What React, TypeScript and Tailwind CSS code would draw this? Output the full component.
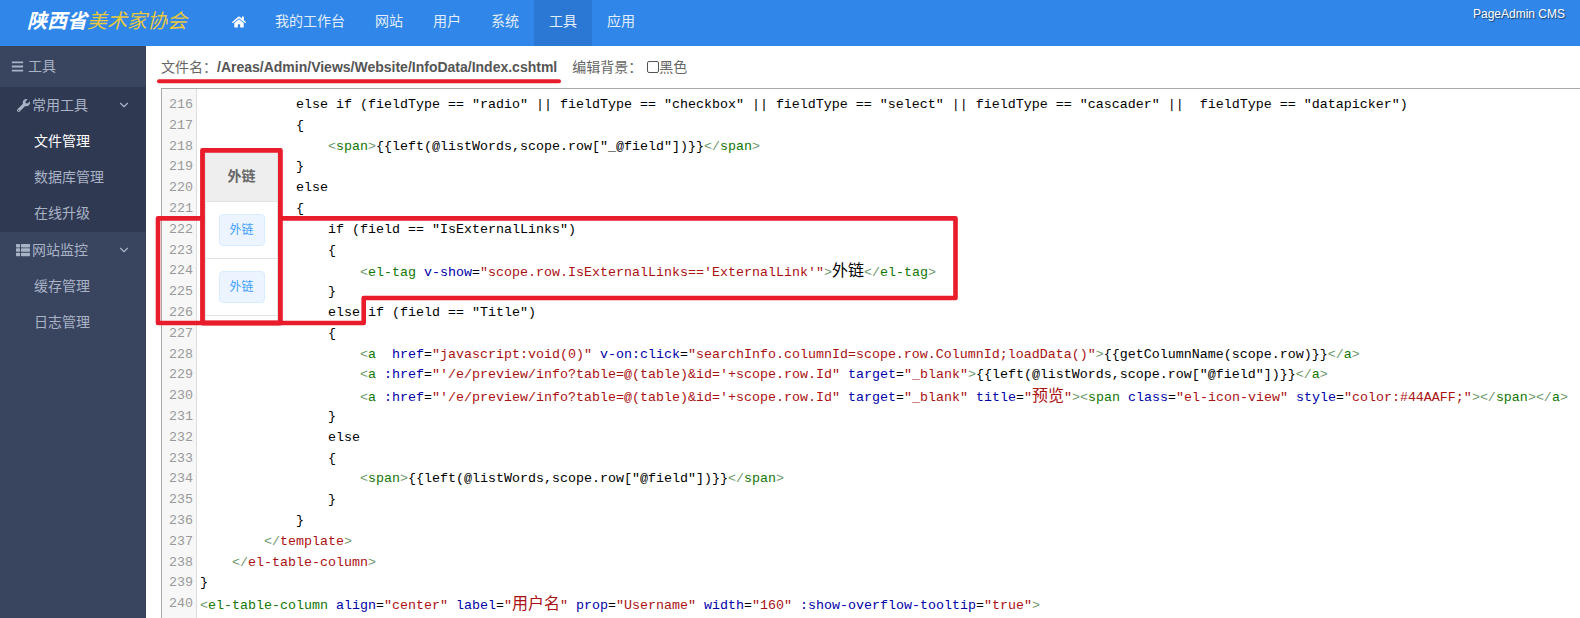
import type { ReactNode } from "react"
import { ChevronDown } from "lucide-react"
import { FaBars, FaHome, FaThList, FaWrench } from "react-icons/fa"

const UI_FONT = "font-['Liberation_Sans','Noto_Sans_CJK_SC',sans-serif]"

const navItems = ["我的工作台", "网站", "用户", "系统", "工具", "应用"]

// [indent in chars, text, closing tag drawn red]; line numbers count up from 216
const codeLines: [number, string, boolean?][] = [
  [12, 'else if (fieldType == "radio" || fieldType == "checkbox" || fieldType == "select" || fieldType == "cascader" ||  fieldType == "datapicker")'],
  [12, "{"],
  [16, '<span>{{left(@listWords,scope.row["_@field"])}}</span>'],
  [12, "}"],
  [12, "else"],
  [12, "{"],
  [16, 'if (field == "IsExternalLinks")'],
  [16, "{"],
  [20, '<el-tag v-show="scope.row.IsExternalLinks==\'ExternalLink\'">外链</el-tag>'],
  [16, "}"],
  [16, 'else if (field == "Title")'],
  [16, "{"],
  [20, '<a  href="javascript:void(0)" v-on:click="searchInfo.columnId=scope.row.ColumnId;loadData()">{{getColumnName(scope.row)}}</a>'],
  [20, '<a :href="\'/e/preview/info?table=@(table)&id=\'+scope.row.Id" target="_blank">{{left(@listWords,scope.row["@field"])}}</a>'],
  [20, '<a :href="\'/e/preview/info?table=@(table)&id=\'+scope.row.Id" target="_blank" title="预览"><span class="el-icon-view" style="color:#44AAFF;"></span></a>'],
  [16, "}"],
  [16, "else"],
  [16, "{"],
  [20, '<span>{{left(@listWords,scope.row["@field"])}}</span>'],
  [16, "}"],
  [12, "}"],
  [8, "</template>", true],
  [4, "</el-table-column>", true],
  [0, "}"],
  [0, '<el-table-column align="center" label="用户名" prop="Username" width="160" :show-overflow-tooltip="true">'],
  [3, '<el-table-column prop="Email">'],
]

// CJK glyphs are a full 16px cell wide, latin ones 8px
const withCjk = (text: string, className: string, key: string) =>
  text.split(/([\u4e00-\u9fff]+)/).map((part, i) =>
    /[\u4e00-\u9fff]/.test(part) ? (
      <span key={`${key}-${i}`} className={`${className} font-['Noto_Sans_CJK_SC',sans-serif] text-[16px] leading-none`}>
        {part}
      </span>
    ) : (
      <span key={`${key}-${i}`} className={className}>
        {part}
      </span>
    ),
  )

const highlight = (line: string, redTag?: boolean) => {
  const out: ReactNode[] = []
  const re = /(<\/?)([\w-]+)|("[^"]*")|([\w:-]+)(?==)|(\/?>)|([\s\S])/g
  let inTag = false
  let plain = ""
  let i = 0
  const flush = () => {
    if (plain) out.push(...withCjk(plain, "text-black", `p${i}`))
    plain = ""
  }
  let m: RegExpExecArray | null
  while ((m = re.exec(line))) {
    i++
    if (m[1]) {
      flush()
      inTag = true
      out.push(<span key={`b${i}`} className="text-[#6f9a6f]">{m[1]}</span>)
      out.push(<span key={`t${i}`} className={redTag ? "text-[#aa1111]" : "text-[#117700]"}>{m[2]}</span>)
    } else if (inTag && m[3]) {
      flush()
      out.push(...withCjk(m[3], "text-[#aa1111]", `s${i}`))
    } else if (inTag && m[4]) {
      flush()
      out.push(<span key={`a${i}`} className="text-[#0000aa]">{m[4]}</span>)
    } else if (inTag && m[5]) {
      flush()
      out.push(<span key={`c${i}`} className="text-[#6f9a6f]">{m[5]}</span>)
      inTag = false
    } else {
      plain += m[0]
    }
  }
  flush()
  return out
}

const SideItem = ({ label, active }: { label: string; active?: boolean }) => (
  <div className={`flex h-9 items-center pl-[34px] text-[14px] ${active ? "text-white" : "text-[#a9b3c6]"}`}>
    {label}
  </div>
)

const SideGroup = ({ icon, label, pad }: { icon: ReactNode; label: string; pad: string }) => (
  <div className={`flex h-9 items-center text-[14px] text-[#a9b3c6] ${pad}`}>
    {icon}
    <span className="flex-1">{label}</span>
    <ChevronDown className="mr-[15px] size-[14px]" strokeWidth={2} />
  </div>
)

const ExternalTag = () => (
  <div className="flex h-[57px] items-center justify-center border-b border-[#e2e2e2]">
    <span className="flex h-8 w-[46px] items-center justify-center rounded border border-[#d9ecff] bg-[#ecf5ff] text-[12px] text-[#409eff]">
      外链
    </span>
  </div>
)

export default function App() {
  return (
    <div className={`relative flex h-[618px] w-[1580px] flex-col overflow-hidden bg-white ${UI_FONT}`}>
      <header className="relative flex h-[46px] shrink-0 items-center bg-[#3086e9] pr-4 text-[14px] text-[#e3eefc]">
        <div className="flex w-[217px] shrink-0 pb-[3px] pl-[27px] text-[20px] leading-[25px] italic">
          <span className="font-bold text-white">陕西省</span>
          <span className="text-[#e9c93f]">美术家协会</span>
        </div>
        <div className="flex h-full">
          <a className="flex h-full w-[43px] items-center justify-center pb-[3px] text-white">
            <FaHome className="size-[14px]" />
          </a>
          {navItems.map((item) => (
            <a
              key={item}
              className={`flex h-full items-center px-[15px] pb-[3px] ${item === "工具" ? "bg-[#2b78d4]" : ""}`}
            >
              {item}
            </a>
          ))}
        </div>
        <span className="absolute top-[6px] right-[15px] text-[12px] leading-4 text-white [text-shadow:1px_1px_1px_#1d3f6e]">
          PageAdmin CMS
        </span>
      </header>

      <div className="flex min-h-0 flex-1">
        <aside className="w-[146px] shrink-0 bg-[#39445f]">
          <div className="flex h-[41px] items-center pl-[11px] text-[14px] text-[#a9b3c6]">
            <FaBars className="mr-[4px] size-[13px]" />
            工具
          </div>
          <div className="bg-[#303952] pb-[1px]">
            <SideGroup icon={<FaWrench className="mr-[2px] size-[13px]" />} label="常用工具" pad="pl-[17px]" />
            <SideItem label="文件管理" active />
            <SideItem label="数据库管理" />
            <SideItem label="在线升级" />
          </div>
          <SideGroup icon={<FaThList className="mr-[2px] size-[14px]" />} label="网站监控" pad="pl-[16px]" />
          <SideItem label="缓存管理" />
          <SideItem label="日志管理" />
        </aside>

        <main className="flex min-w-0 flex-1 flex-col pl-[15px]">
          <div className="flex h-[42px] shrink-0 items-center text-[14px] text-[#666]">
            <span>文件名：</span>
            <b className="text-[#555]">/Areas/Admin/Views/Website/InfoData/Index.cshtml</b>
            <span className="ml-[15px]">编辑背景：</span>
            <input type="checkbox" readOnly className="ml-[5px] size-[12px] appearance-none rounded-[2px] border border-[#555] bg-white" />
            <span>黑色</span>
          </div>

          <div className="flex min-h-0 flex-1 overflow-hidden border-t border-l border-[#a9a9a9] font-['Liberation_Mono',monospace] text-[13.33px]">
            <div className="w-[35px] shrink-0 border-r border-[#dddddd] bg-[#f7f7f7] pt-[6px] pr-[3px] text-right text-[#999]">
              {codeLines.map((_, i) => (
                <div key={i} className="h-[20.8px] leading-[20.8px]">
                  {216 + i}
                </div>
              ))}
            </div>
            <div className="min-w-0 flex-1 pt-[6px] pl-[3px]">
              {codeLines.map(([indent, text, redTag], i) => (
                <div key={i} className="h-[20.8px] leading-[20.8px] whitespace-pre">
                  {" ".repeat(indent)}
                  {highlight(text, redTag)}
                </div>
              ))}
            </div>
          </div>
        </main>
      </div>

      {/* pasted list preview, sits on top of the editor */}
      <div className="absolute top-[151px] left-[205px] w-[73px] border-x border-[#e2e2e2] bg-white">
        <div className="flex h-[51px] items-center justify-center border-b border-[#e2e2e2] bg-[#eeeeee] text-[14px] font-bold text-[#666]">
          外链
        </div>
        <ExternalTag />
        <ExternalTag />
        <div className="h-[5px]" />
      </div>

      {/* red marker annotations, the big outline stops at the preview box on both sides */}
      <svg className="pointer-events-none absolute inset-0" width="1580" height="618" fill="none" stroke="#e81c2b" strokeLinejoin="round" strokeLinecap="round">
        <path d="M159 81.3H559" strokeWidth="4" />
        <path d="M202 218.4H158V323H363.7V298H955.5V218.4H281" strokeWidth="4.6" />
        <path d="M202.5 150.4H280.4V323H202.5Z" strokeWidth="4.8" />
      </svg>
    </div>
  )
}
